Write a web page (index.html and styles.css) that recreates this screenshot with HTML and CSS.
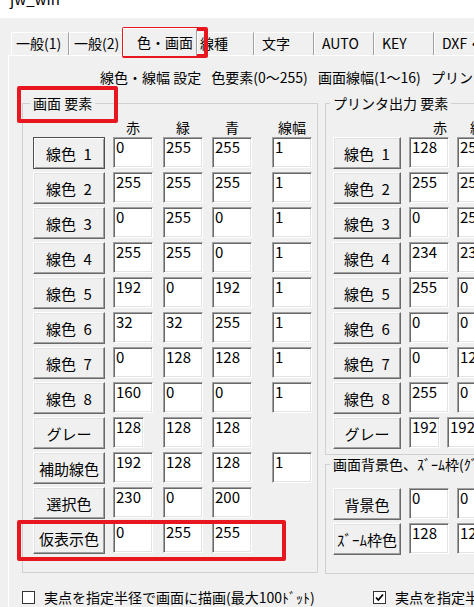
FILE: index.html
```html
<!DOCTYPE html>
<html lang="ja">
    <head>
        <meta charset="utf-8" />
        <title>jw_win</title>
        <link rel="stylesheet" href="styles.css">
    </head>
    <body>
        <div class="window">
            <div class="titlebar"><span class="title">jw_win</span></div>

            <div class="tabbar">
                <div class="tab tabG1">一般(1)</div>
                <div class="tab tabG2">一般(2)</div>
                <div class="tab tabActive">色・画面</div>
                <div class="tab tabLine">線種</div>
                <div class="tab">文字</div>
                <div class="tab">AUTO</div>
                <div class="tab">KEY</div>
                <div class="tab">DXF・SXF・JWC</div>
            </div>

            <div class="panel">
                <div class="heading">
                    <span class="headPart">線色・線幅 設定</span>
                    <span class="headPart">色要素(0～255)</span>
                    <span class="headPart">画面線幅(1～16)</span>
                    <span class="headPart">プリンタ出力 要素(0～255)</span>
                </div>

                <div class="groups">
                    <fieldset class="group screenGroup">
                        <legend>画面 要素</legend>
                        <div class="grid screenGrid">
                            <div class="colHead"></div>
                            <div class="colHead">赤</div>
                            <div class="colHead">緑</div>
                            <div class="colHead">青</div>
                            <div class="colHead">線幅</div>

                            <button class="btn btnDefault">線色&ensp;1</button>
                            <div class="field">0</div><div class="field">255</div><div class="field">255</div><div class="field">1</div>

                            <button class="btn">線色&ensp;2</button>
                            <div class="field">255</div><div class="field">255</div><div class="field">255</div><div class="field">1</div>

                            <button class="btn">線色&ensp;3</button>
                            <div class="field">0</div><div class="field">255</div><div class="field">0</div><div class="field">1</div>

                            <button class="btn">線色&ensp;4</button>
                            <div class="field">255</div><div class="field">255</div><div class="field">0</div><div class="field">1</div>

                            <button class="btn">線色&ensp;5</button>
                            <div class="field">192</div><div class="field">0</div><div class="field">192</div><div class="field">1</div>

                            <button class="btn">線色&ensp;6</button>
                            <div class="field">32</div><div class="field">32</div><div class="field">255</div><div class="field">1</div>

                            <button class="btn">線色&ensp;7</button>
                            <div class="field">0</div><div class="field">128</div><div class="field">128</div><div class="field">1</div>

                            <button class="btn">線色&ensp;8</button>
                            <div class="field">160</div><div class="field">0</div><div class="field">0</div><div class="field">1</div>

                            <button class="btn">グレー</button>
                            <div class="field fieldNarrow">128</div><div class="field">128</div><div class="field">128</div><div></div>

                            <button class="btn">補助線色</button>
                            <div class="field">192</div><div class="field">128</div><div class="field">128</div><div class="field">1</div>

                            <button class="btn">選択色</button>
                            <div class="field">230</div><div class="field">0</div><div class="field">200</div><div></div>

                            <button class="btn">仮表示色</button>
                            <div class="field">0</div><div class="field">255</div><div class="field">255</div><div></div>
                        </div>
                    </fieldset>

                    <div class="rightCol">
                        <fieldset class="group printGroup">
                            <legend>プリンタ出力 要素</legend>
                            <div class="grid printGrid">
                                <div class="colHead"></div>
                                <div class="colHead printHead">赤</div>
                                <div class="colHead">緑</div>

                                <button class="btn btnSmall">線色&ensp;1</button>
                                <div class="field">128</div><div class="field">255</div>
                                <button class="btn btnSmall">線色&ensp;2</button>
                                <div class="field">255</div><div class="field">255</div>
                                <button class="btn btnSmall">線色&ensp;3</button>
                                <div class="field">0</div><div class="field">255</div>
                                <button class="btn btnSmall">線色&ensp;4</button>
                                <div class="field">234</div><div class="field">234</div>
                                <button class="btn btnSmall">線色&ensp;5</button>
                                <div class="field">255</div><div class="field">0</div>
                                <button class="btn btnSmall">線色&ensp;6</button>
                                <div class="field">0</div><div class="field">0</div>
                                <button class="btn btnSmall">線色&ensp;7</button>
                                <div class="field">0</div><div class="field">128</div>
                                <button class="btn btnSmall">線色&ensp;8</button>
                                <div class="field">255</div><div class="field">0</div>
                                <button class="btn btnSmall">グレー</button>
                                <div class="field fieldNarrow">192</div><div class="field fieldShift">192</div>
                            </div>
                        </fieldset>

                        <fieldset class="group backGroup">
                            <legend>画面背景色、ｽﾞｰﾑ枠(ｸﾞﾘｯﾄﾞ)</legend>
                            <div class="grid backGrid">
                                <button class="btn btnSmall">背景色</button>
                                <div class="field">0</div><div class="field">0</div>
                                <button class="btn btnSmall">ｽﾞｰﾑ枠色</button>
                                <div class="field">128</div><div class="field">128</div>
                            </div>
                        </fieldset>
                    </div>
                </div>

                <div class="options">
                    <label class="option optionFirst">
                        <span class="checkbox"></span>
                        <span>実点を指定半径で画面に描画(最大100ﾄﾞｯﾄ)</span>
                    </label>
                    <label class="option">
                        <span class="checkbox">
                            <svg width="11" height="11" viewBox="0 0 11 11"><polyline points="2,5.5 4.3,8 9,2.5" fill="none" stroke="#000" stroke-width="1.8"/></svg>
                        </span>
                        <span>実点を指定半径でプリンタ出力</span>
                    </label>
                </div>
            </div>

            <!-- red annotation frames -->
            <div class="mark markTab"></div>
            <div class="mark markLegend"></div>
            <div class="mark markRow"></div>
        </div>
    </body>
</html>
```

FILE: styles.css
```css
* {
    box-sizing: border-box;
}

html, body {
    margin: 0;
    font-family: "Noto Sans CJK JP", "Noto Sans", sans-serif;
    font-size: 14px;
    color: #000;
    background-color: #f0f0f0;
}

.window {
    position: relative;
    width: 474px;
    height: 607px;
    overflow: hidden;
    background-color: #f0f0f0;
}

.titlebar {
    height: 18px;
    background-color: #fff;
    overflow: hidden;
    padding-left: 10px;
}

.title {
    display: block;
    font-size: 15px;
    line-height: 16px;
    margin-top: -9px;
}

.tabbar {
    display: flex;
    align-items: flex-end;
    height: 37px;
    padding-left: 11px;
    white-space: nowrap;
}

.tab {
    flex: none;
    width: 60px;
    height: 23px;
    padding-left: 7px;
    line-height: 21px;
    border-top: 1px solid #fff;
    border-left: 1px solid #fff;
    border-right: 1px solid #a0a0a0;
    overflow: hidden;
}

.tabG1 {
    width: 58px;
    padding-left: 4px;
}

.tabG2 {
    width: 54px;
    padding-left: 4px;
}

.tabActive {
    position: relative;
    z-index: 1;
    width: 74px;
    height: 28px;
    margin-bottom: -1px;
    padding-left: 13px;
    line-height: 26px;
    background-color: #f0f0f0;
}

.tabLine {
    width: 57px;
    padding-left: 2px;
}

.panel {
    margin-left: 8px;
    height: 560px;
    border-top: 1px solid #fff;
    border-left: 1px solid #fff;
}

.heading {
    height: 39px;
    padding: 13px 0 0 91px;
    line-height: 16px;
    white-space: nowrap;
}

.headPart {
    margin-right: 7px;
}

.groups {
    display: flex;
    align-items: flex-start;
    padding-left: 13px;
}

.group {
    margin: 0;
    min-width: 0;
    border: 1px solid #d0d0d0;
}

.group legend {
    margin-left: -3px;
    padding: 0 3px;
    line-height: 16px;
    white-space: nowrap;
}

.screenGroup {
    flex: none;
    width: 296px;
    padding: 9px 0 18px 10px;
}

.rightCol {
    flex: none;
    margin-left: 7px;
    width: 200px;
}

.printGroup {
    padding: 9px 0 5px 7px;
}

.backGroup {
    margin-top: 1px;
    padding: 16px 0 18px 7px;
}

.grid {
    display: grid;
    row-gap: 3px;
    grid-auto-rows: 32px;
}

.screenGrid {
    grid-template-columns: 80px 50px 49px 60px 40px;
    grid-template-rows: 14px;
}

.printGrid {
    grid-template-columns: 76px 48px 48px;
    grid-template-rows: 14px;
}

.backGrid {
    grid-template-columns: 76px 48px 48px;
}

.colHead {
    width: 40px;
    line-height: 14px;
    text-align: center;
}

.printHead {
    text-align: left;
    padding-left: 24px;
}

.btn {
    width: 72px;
    height: 32px;
    padding: 0;
    font-family: inherit;
    font-size: 15px;
    color: #000;
    background-color: #f0f0f0;
    border: 1px solid;
    border-color: #fff #696969 #696969 #fff;
    box-shadow: inset -1px -1px 0 #a0a0a0, inset 1px 1px 0 #e3e3e3;
    white-space: nowrap;
}

.btnDefault {
    border-color: #505050;
    box-shadow: inset 1px 1px 0 #fff, inset -1px -1px 0 #a0a0a0;
}

.btnSmall {
    width: 68px;
}

.field {
    width: 40px;
    height: 31px;
    padding-left: 2px;
    font-size: 15px;
    line-height: 18px;
    background-color: #fff;
    border: 1px solid;
    border-color: #a0a0a0 #fff #fff #a0a0a0;
    box-shadow: inset 1px 1px 0 #696969, inset -1px -1px 0 #e3e3e3;
}

.fieldNarrow {
    width: 31px;
}

.fieldShift {
    margin-left: -10px;
}

.options {
    display: flex;
    margin-top: 16px;
    padding-left: 13px;
    white-space: nowrap;
}

.option {
    display: flex;
    flex: none;
    align-items: center;
    gap: 9px;
    line-height: 14px;
}

.optionFirst {
    width: 351px;
}

.checkbox {
    display: flex;
    flex: none;
    align-items: center;
    justify-content: center;
    width: 13px;
    height: 13px;
    background-color: #fff;
    border: 1px solid #333;
}

.mark {
    position: absolute;
    border: 4px solid #e8161f;
    border-radius: 2px;
}

.markTab {
    left: 122px;
    top: 27px;
    width: 86px;
    height: 31px;
}

.markLegend {
    left: 17px;
    top: 86px;
    width: 101px;
    height: 37px;
}

.markRow {
    left: 17px;
    top: 520px;
    width: 269px;
    height: 41px;
}
```
